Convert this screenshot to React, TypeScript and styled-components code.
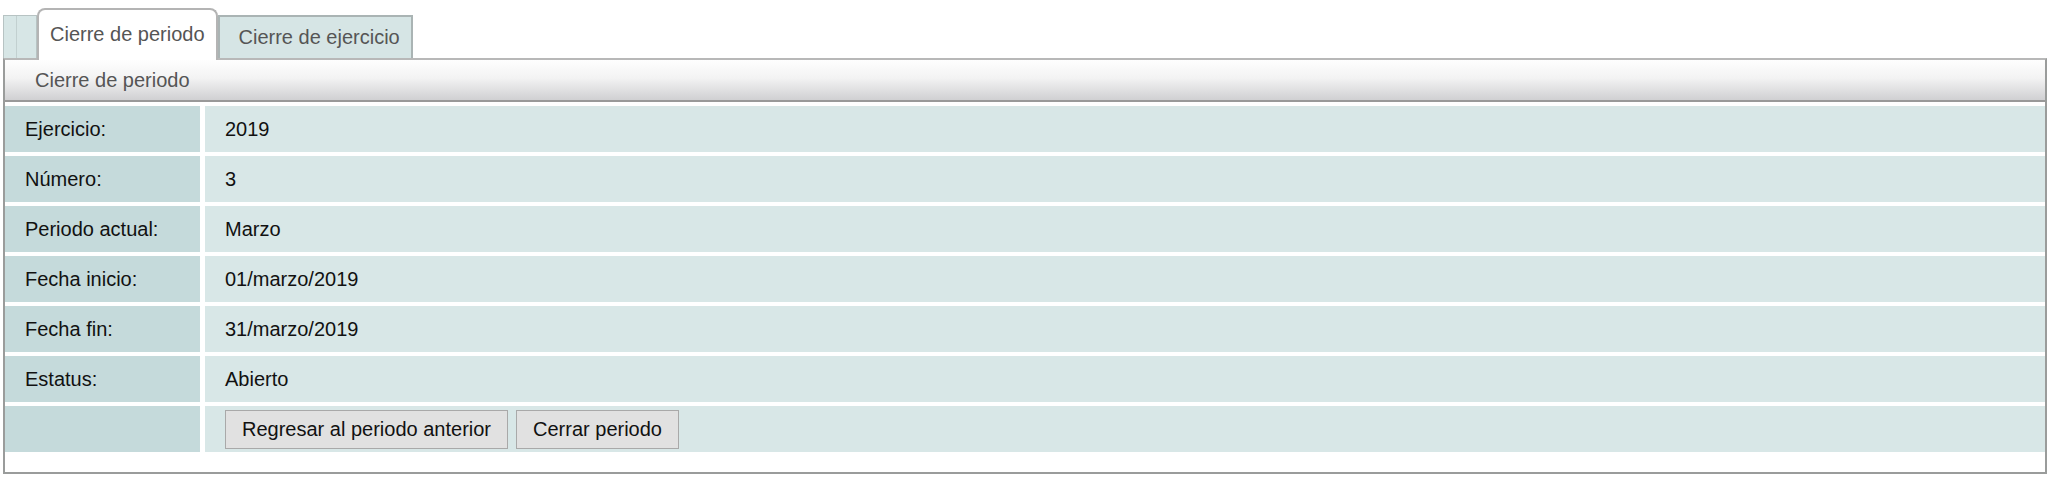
import React from 'react';
import styled, { createGlobalStyle } from 'styled-components';

const GlobalStyle = createGlobalStyle`
  body {
    margin: 0;
    background: #ffffff;
    font-family: 'Liberation Sans', Arial, sans-serif;
  }
`;

type TField = {
  label: string;
  value: string;
};

const fields: TField[] = [
  { label: 'Ejercicio:', value: '2019' },
  { label: 'Número:', value: '3' },
  { label: 'Periodo actual:', value: 'Marzo' },
  { label: 'Fecha inicio:', value: '01/marzo/2019' },
  { label: 'Fecha fin:', value: '31/marzo/2019' },
  { label: 'Estatus:', value: 'Abierto' },
];

const App: React.FC = () => {
  return (
    <Page>
      <GlobalStyle />
      <TabBar>
        <Stub />
        <Tab $active>Cierre de periodo</Tab>
        <Tab>Cierre de ejercicio</Tab>
      </TabBar>
      <Panel>
        <PanelHeader>Cierre de periodo</PanelHeader>
        <Grid>
          {fields.map((f) => (
            <React.Fragment key={f.label}>
              <Label>{f.label}</Label>
              <Value>{f.value}</Value>
            </React.Fragment>
          ))}
          <Label />
          <Value>
            <Button>Regresar al periodo anterior</Button>
            <Button>Cerrar periodo</Button>
          </Value>
        </Grid>
      </Panel>
    </Page>
  );
};

const Page = styled.div`
  padding: 8px 2px 0 3px;
`;

const TabBar = styled.div`
  display: flex;
  align-items: flex-end;
  height: 50px;
  position: relative;
  z-index: 1;
`;

const Stub = styled.div`
  width: 34px;
  height: 43px;
  box-sizing: border-box;
  border: 1px solid #b7c3c3;
  border-bottom: none;
  background: linear-gradient(
      to right,
      transparent 12px,
      #c2d0d0 12px,
      #c2d0d0 13px,
      transparent 13px
    ),
    #d7e6e6;
`;

const Tab = styled.div<{ $active?: boolean }>`
  box-sizing: border-box;
  display: flex;
  align-items: center;
  font-size: 20px;
  color: #555555;
  border: 2px solid ${({ $active }) => ($active ? '#b4b4b4' : '#aab4b4')};
  border-bottom: none;
  ${({ $active }) =>
    $active
      ? `
    height: 52px;
    margin-bottom: -2px;
    padding: 0 11px 2px 11px;
    background: #ffffff;
    border-radius: 8px 8px 0 0;
  `
      : `
    width: 195px;
    height: 43px;
    padding: 0 0 0 19px;
    background: #d6e5e5;
  `}
`;

const Panel = styled.div`
  border: 2px solid #9a9c9b;
  border-top-color: #b8b8b8;
  padding-bottom: 20px;
`;

const PanelHeader = styled.div`
  height: 40px;
  display: flex;
  align-items: center;
  padding-left: 30px;
  font-size: 20px;
  color: #555555;
  background: linear-gradient(to bottom, #fefefe 0%, #f3f3f3 45%, #d0d0d2 100%);
  border-bottom: 2px solid #999999;
`;

const Grid = styled.div`
  margin-top: 4px;
  display: grid;
  grid-template-columns: 195px 1fr;
  column-gap: 5px;
  row-gap: 4px;
`;

const Label = styled.div`
  height: 46px;
  display: flex;
  align-items: center;
  padding-left: 20px;
  background: #c5dadb;
  font-size: 20px;
  color: #111111;
`;

const Value = styled.div`
  height: 46px;
  display: flex;
  align-items: center;
  gap: 8px;
  padding-left: 20px;
  background: #d8e7e7;
  font-size: 20px;
  color: #111111;
`;

const Button = styled.button`
  height: 39px;
  padding: 0 16px;
  border: 1px solid #a9a9a9;
  background: #e1e1e1;
  font-family: 'Liberation Sans', Arial, sans-serif;
  font-size: 20px;
  color: #111111;
  cursor: pointer;
`;

export default App;
